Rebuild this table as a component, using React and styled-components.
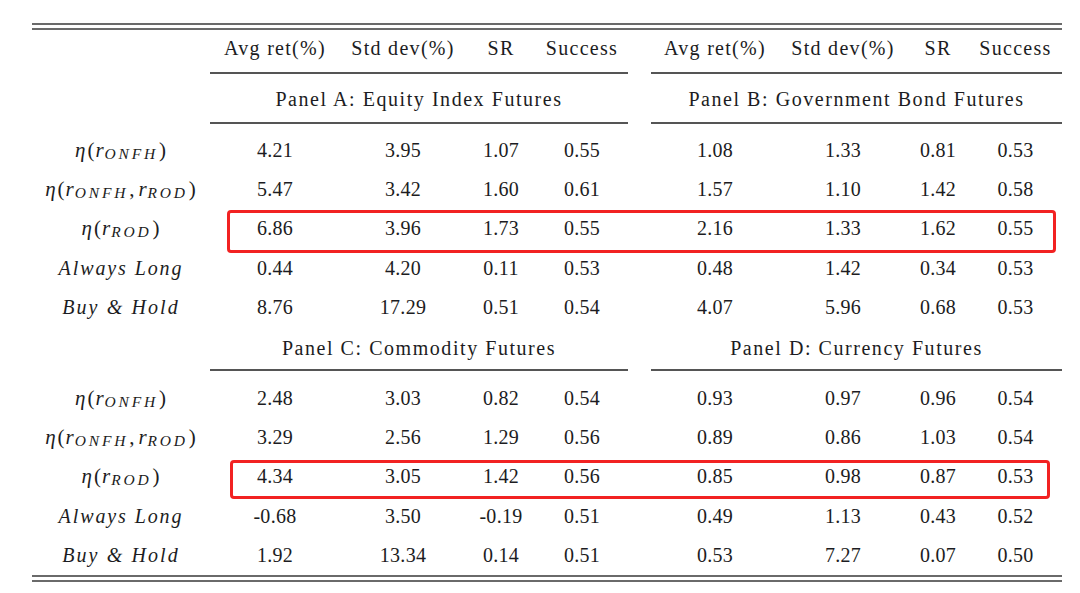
import styled, { createGlobalStyle } from "styled-components";

const GlobalStyle = createGlobalStyle`
  html, body {
    margin: 0;
    padding: 0;
    background: #ffffff;
  }
  body {
    font-family: "Liberation Serif", "Times New Roman", serif;
    color: #1c1c22;
  }
`;

const LEFT_COLS = "130px 126px 70px 92px";
const RIGHT_COLS = "128px 128px 62px 93px";
const ROW_H = 39.4;

const Page = styled.div`
  width: 1080px;
  height: 593px;
  padding: 23px 18px 0 32px;
  box-sizing: border-box;
`;

const Table = styled.div`
  width: 1030px;
  display: flex;
  flex-direction: column;
`;

const DoubleRule = styled.div`
  height: 3px;
  border-top: 2px solid #6a6a6a;
  border-bottom: 2px solid #6a6a6a;
`;

const Row = styled.div`
  position: relative;
  display: grid;
  grid-template-columns: 178px 418px 23px 411px;
  padding-top: ${(p) => p.$top || 0}px;
`;

const Group = styled.div`
  display: grid;
  grid-template-columns: ${(p) => p.$cols};
  align-items: center;
  height: ${(p) => p.$h}px;
  box-sizing: border-box;
  border-bottom: ${(p) => (p.$rule ? "2px solid #555" : "none")};
`;

const HeadCell = styled.div`
  text-align: center;
  font-size: 20px;
  letter-spacing: 1.3px;
  line-height: 24px;
  padding-bottom: 6px;
  white-space: nowrap;
`;

const PanelTitle = styled.div`
  height: ${(p) => p.$h}px;
  box-sizing: border-box;
  border-bottom: 2px solid #555;
  text-align: center;
  font-size: 20px;
  letter-spacing: 1.55px;
  line-height: 24px;
  padding-top: ${(p) => p.$pad}px;
  white-space: nowrap;
`;

const Cell = styled.div`
  text-align: center;
  font-size: 20px;
  letter-spacing: 0.3px;
  line-height: 24px;
`;

const Label = styled.div`
  display: flex;
  align-items: center;
  justify-content: center;
  height: ${ROW_H}px;
  font-size: 21px;
  line-height: 24px;
  white-space: nowrap;
`;

const Paren = styled.span`
  margin: 0 ${(p) => p.$after || 1}px 0 1px;
`;

const MathName = styled.span`
  font-style: italic;
  letter-spacing: ${(p) => p.$spacing || "1px"};
  font-size: ${(p) => p.$size || "21px"};
`;

const Sub = styled.span`
  font-style: italic;
  font-size: 15.5px;
  letter-spacing: 2.8px;
  position: relative;
  top: 4px;
`;

const Highlight = styled.div`
  position: absolute;
  left: ${(p) => p.$box[0]}px;
  top: ${(p) => p.$box[1]}px;
  right: ${(p) => p.$box[2]}px;
  bottom: ${(p) => p.$box[3]}px;
  border: 3px solid #f22222;
  border-radius: 4px;
  pointer-events: none;
`;

const Spacer = styled.div``;

const headers = ["Avg ret(%)", "Std dev(%)", "SR", "Success"];

const labels = {
  onfh: (
    <>
      <MathName>η</MathName>
      <Paren>(</Paren>
      <MathName>r</MathName>
      <Sub>ONFH</Sub>
      <Paren>)</Paren>
    </>
  ),
  both: (
    <>
      <MathName>η</MathName>
      <Paren>(</Paren>
      <MathName>r</MathName>
      <Sub>ONFH</Sub>
      <Paren $after={4}>,</Paren>
      <MathName>r</MathName>
      <Sub>ROD</Sub>
      <Paren>)</Paren>
    </>
  ),
  rod: (
    <>
      <MathName>η</MathName>
      <Paren>(</Paren>
      <MathName>r</MathName>
      <Sub>ROD</Sub>
      <Paren>)</Paren>
    </>
  ),
  long: (
    <MathName $spacing="1.9px" $size="20px">
      Always Long
    </MathName>
  ),
  hold: (
    <MathName $spacing="2.1px" $size="20px">
      Buy &amp; Hold
    </MathName>
  ),
};

const panels = [
  {
    titles: ["Panel A: Equity Index Futures", "Panel B: Government Bond Futures"],
    titleH: 50,
    titlePad: 13,
    gap: 6,
    rows: [
      ["onfh", ["4.21", "3.95", "1.07", "0.55"], ["1.08", "1.33", "0.81", "0.53"]],
      ["both", ["5.47", "3.42", "1.60", "0.61"], ["1.57", "1.10", "1.42", "0.58"]],
      ["rod", ["6.86", "3.96", "1.73", "0.55"], ["2.16", "1.33", "1.62", "0.55"], [195, 1, 6, -5]],
      ["long", ["0.44", "4.20", "0.11", "0.53"], ["0.48", "1.42", "0.34", "0.53"]],
      ["hold", ["8.76", "17.29", "0.51", "0.54"], ["4.07", "5.96", "0.68", "0.53"]],
    ],
  },
  {
    titles: ["Panel C: Commodity Futures", "Panel D: Currency Futures"],
    titleH: 44,
    titlePad: 9,
    gap: 7,
    rows: [
      ["onfh", ["2.48", "3.03", "0.82", "0.54"], ["0.93", "0.97", "0.96", "0.54"]],
      ["both", ["3.29", "2.56", "1.29", "0.56"], ["0.89", "0.86", "1.03", "0.54"]],
      ["rod", ["4.34", "3.05", "1.42", "0.56"], ["0.85", "0.98", "0.87", "0.53"], [198, 3, 12, -3]],
      ["long", ["-0.68", "3.50", "-0.19", "0.51"], ["0.49", "1.13", "0.43", "0.52"]],
      ["hold", ["1.92", "13.34", "0.14", "0.51"], ["0.53", "7.27", "0.07", "0.50"]],
    ],
  },
];

const DataRow = ({ label, left, right, box }) => (
  <Row>
    <Label>{labels[label]}</Label>
    <Group $cols={LEFT_COLS} $h={ROW_H}>
      {left.map((v, i) => (
        <Cell key={i}>{v}</Cell>
      ))}
    </Group>
    <Spacer />
    <Group $cols={RIGHT_COLS} $h={ROW_H}>
      {right.map((v, i) => (
        <Cell key={i}>{v}</Cell>
      ))}
    </Group>
    {box && <Highlight $box={box} />}
  </Row>
);

const Panel = ({ panel }) => (
  <>
    <Row>
      <Spacer />
      <PanelTitle $h={panel.titleH} $pad={panel.titlePad}>
        {panel.titles[0]}
      </PanelTitle>
      <Spacer />
      <PanelTitle $h={panel.titleH} $pad={panel.titlePad}>
        {panel.titles[1]}
      </PanelTitle>
    </Row>
    <Row $top={panel.gap}>
      <Spacer />
    </Row>
    {panel.rows.map(([label, left, right, box], i) => (
      <DataRow key={i} label={label} left={left} right={right} box={box} />
    ))}
  </>
);

export default function App() {
  return (
    <Page>
      <GlobalStyle />
      <Table>
        <DoubleRule />
        <Row>
          <Spacer />
          <Group $cols={LEFT_COLS} $h={44} $rule>
            {headers.map((h) => (
              <HeadCell key={h}>{h}</HeadCell>
            ))}
          </Group>
          <Spacer />
          <Group $cols={RIGHT_COLS} $h={44} $rule>
            {headers.map((h) => (
              <HeadCell key={h}>{h}</HeadCell>
            ))}
          </Group>
        </Row>
        {panels.map((p, i) => (
          <Panel key={i} panel={p} />
        ))}
        <DoubleRule />
      </Table>
    </Page>
  );
}
